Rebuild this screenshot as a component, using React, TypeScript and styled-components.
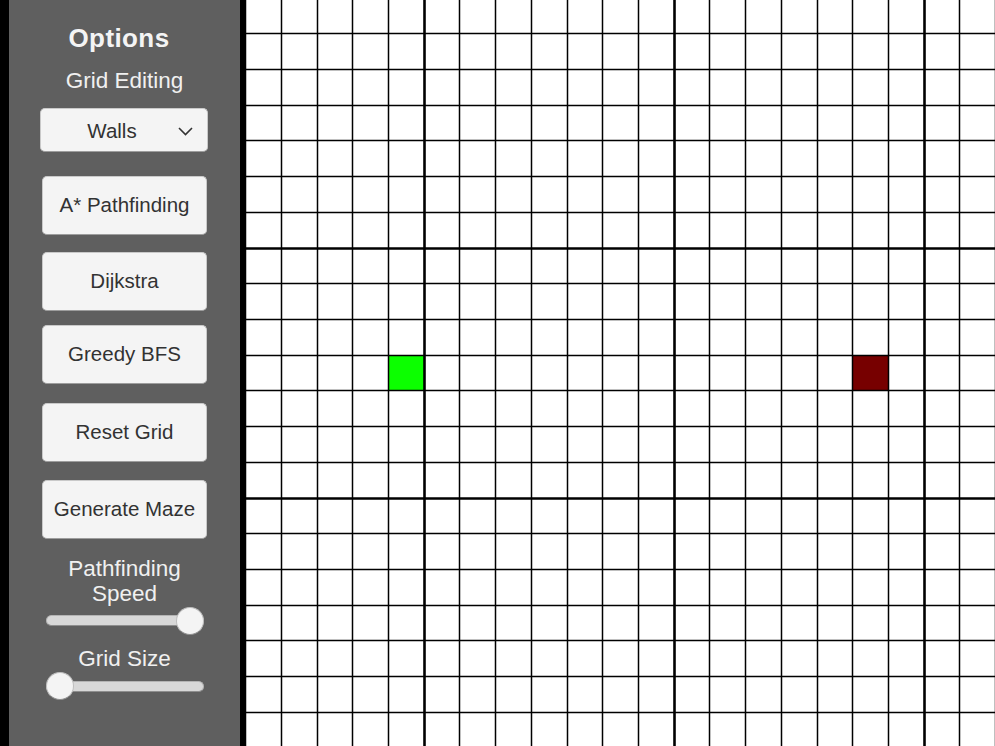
import React from "react";
import styled, { createGlobalStyle } from "styled-components";

const Global = createGlobalStyle`
  html, body { margin: 0; padding: 0; background: #000; }
  body { font-family: "Liberation Sans", Arial, sans-serif; overflow: hidden; }
`;

const Screen = styled.div`
  width: 995px;
  height: 746px;
  display: flex;
  background: #000;
  overflow: hidden;
`;

const Sidebar = styled.aside`
  margin-left: 9px;
  width: 231px;
  height: 100%;
  background: #5f5f5f;
  display: flex;
  flex-direction: column;
  align-items: center;
  padding-top: 23px;
  box-sizing: border-box;
`;

const Title = styled.h1`
  margin: 0 11px 0 0;
  font-size: 26px;
  line-height: 30px;
  font-weight: 700;
  color: #f4f4f4;
  letter-spacing: 0.4px;
`;

const Label = styled.div<{ $mt: number }>`
  margin-top: ${(p) => p.$mt}px;
  font-size: 22.5px;
  line-height: 25.5px;
  color: #f0f0f0;
  text-align: center;
  width: 140px;
`;

const Dropdown = styled.div`
  position: relative;
  margin-top: 14px;
  margin-right: 1px;
  width: 168px;
  height: 44px;
  box-sizing: border-box;
  background: #f4f4f4;
  border-radius: 5px;
  border: 1px solid #c9c9c9;
  border-bottom-color: #9d9d9d;
  display: flex;
  align-items: center;
`;

const DropdownLabel = styled.span`
  flex: 1;
  text-align: center;
  padding-right: 24px;
  font-size: 20.5px;
  color: #323232;
  margin-top: 2px;
`;

const Chevron = styled.svg`
  position: absolute;
  right: 14px;
  top: 18px;
`;

const Button = styled.button<{ $mt: number }>`
  margin-top: ${(p) => p.$mt}px;
  width: 165px;
  height: 59px;
  box-sizing: border-box;
  background: #f4f4f4;
  border: 1px solid #c9c9c9;
  border-bottom-color: #9d9d9d;
  border-radius: 5px;
  font-family: "Liberation Sans", Arial, sans-serif;
  font-size: 20.5px;
  color: #323232;
  padding: 0;
  cursor: pointer;
`;

const SliderWrap = styled.div<{ $mt: number }>`
  position: relative;
  margin-top: ${(p) => p.$mt}px;
  width: 158px;
  height: 28px;
  display: flex;
  align-items: center;
`;

const Track = styled.div`
  width: 100%;
  height: 11px;
  box-sizing: border-box;
  background: #d8d8d8;
  border: 1px solid #b4b4b4;
  border-bottom-color: #8e8e8e;
  border-radius: 6px;
`;

const Knob = styled.div`
  position: absolute;
  top: 0;
  width: 28px;
  height: 28px;
  box-sizing: border-box;
  border-radius: 50%;
  background: #f4f4f4;
  border: 1px solid #bdbdbd;
  border-bottom-color: #8f8f8f;
`;

const GridArea = styled.main`
  margin-left: 5px;
  flex: 1;
  height: 100%;
  background: #fff;
  overflow: hidden;
`;

const Slider = ({ value, mt }: { value: number; mt: number }) => (
  <SliderWrap $mt={mt}>
    <Track />
    <Knob style={{ left: `${value * 130}px` }} />
  </SliderWrap>
);

const CELL = 250 / 7;
const OX = 178.7; // thick vertical line at local x
const OY = 247.6; // thick horizontal line at y

const GridCanvas = () => {
  const W = 750;
  const H = 746;
  const vLines: { x: number; thick: boolean }[] = [];
  for (let k = -5; k <= 17; k++) {
    const x = OX + k * CELL;
    if (x > W + 2) break;
    vLines.push({ x: Math.round(x) + 0.5, thick: ((k % 7) + 7) % 7 === 0 });
  }
  const hLines: { y: number; thick: boolean }[] = [];
  for (let k = -7; k <= 14; k++) {
    const y = OY + k * CELL;
    if (y < -3 || y > H + 2) continue;
    hLines.push({ y: Math.round(y) + 0.5, thick: ((k % 7) + 7) % 7 === 0 });
  }
  const px = (v: number) => Math.round(v);
  const cellY = px(OY + 3 * CELL);
  const cellH = px(OY + 4 * CELL) - cellY + 1;
  const gx = px(OX - CELL);
  const gw = px(OX) - gx + 1;
  const rx = px(OX + 12 * CELL);
  const rw = px(OX + 13 * CELL) - rx + 1;
  return (
    <svg width={W} height={H} viewBox={`0 0 ${W} ${H}`} style={{ display: "block" }}>
      <rect x={gx} y={cellY} width={gw} height={cellH} fill="#0cff00" />
      <rect x={rx} y={cellY} width={rw} height={cellH} fill="#770000" />
      {vLines.map((l, i) => (
        <line
          key={`v${i}`}
          x1={l.x}
          x2={l.x}
          y1={0}
          y2={H}
          stroke="#000"
          strokeWidth={l.thick ? 2.6 : 1.5}
        />
      ))}
      {hLines.map((l, i) => (
        <line
          key={`h${i}`}
          x1={0}
          x2={W}
          y1={l.y}
          y2={l.y}
          stroke="#000"
          strokeWidth={l.thick ? 2.6 : 1.5}
        />
      ))}
    </svg>
  );
};

export default function App() {
  return (
    <>
      <Global />
      <Screen>
        <Sidebar>
          <Title>Options</Title>
          <Label $mt={15}>Grid Editing</Label>
          <Dropdown>
            <DropdownLabel>Walls</DropdownLabel>
            <Chevron width="15" height="9" viewBox="0 0 15 9">
              <polyline points="1,1 7.5,7.5 14,1" fill="none" stroke="#333" strokeWidth="1.6" />
            </Chevron>
          </Dropdown>
          <Button $mt={24}>A* Pathfinding</Button>
          <Button $mt={17}>Dijkstra</Button>
          <Button $mt={14}>Greedy BFS</Button>
          <Button $mt={19}>Reset Grid</Button>
          <Button $mt={18}>Generate Maze</Button>
          <Label $mt={17}>Pathfinding Speed</Label>
          <Slider value={1} mt={0} />
          <Label $mt={11}>Grid Size</Label>
          <Slider value={0} mt={1} />
        </Sidebar>
        <GridArea>
          <GridCanvas />
        </GridArea>
      </Screen>
    </>
  );
}
